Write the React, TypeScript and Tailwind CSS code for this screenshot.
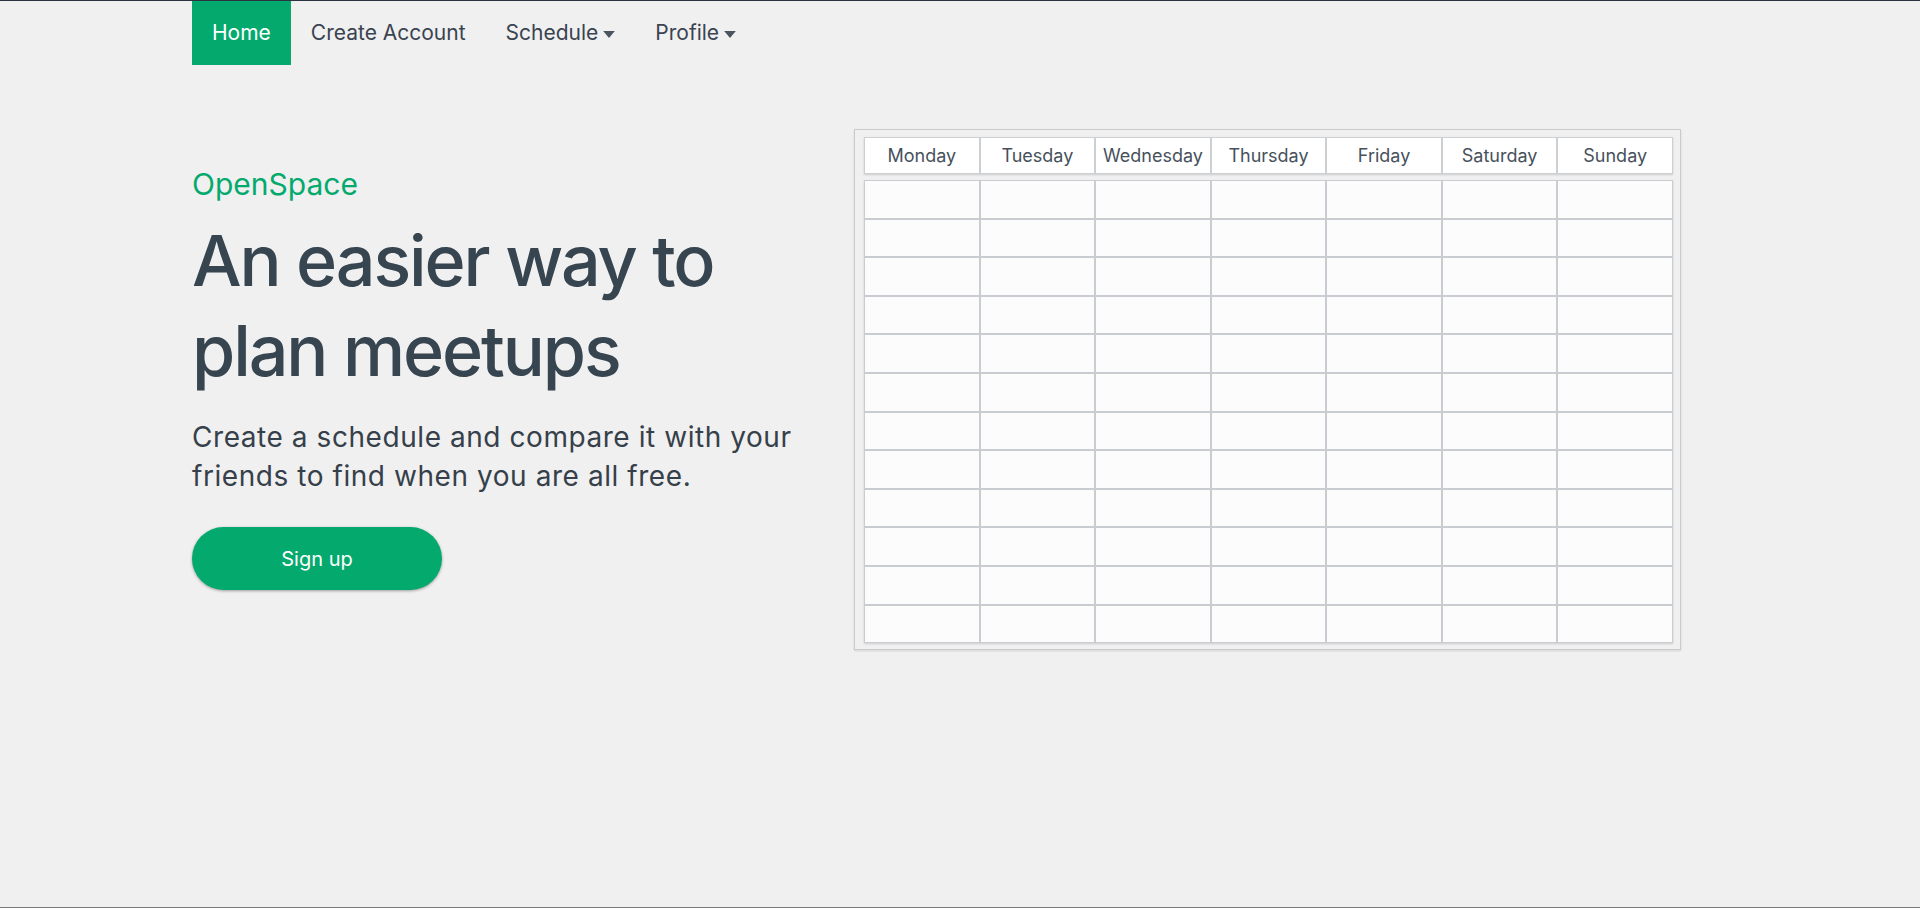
const days = ["Monday", "Tuesday", "Wednesday", "Thursday", "Friday", "Saturday", "Sunday"];
const rows = Array.from({ length: 12 }, (_, i) => i);

const Caret = () => (
  <svg width="12" height="7" viewBox="0 0 10 6" className="ml-[5px] mt-[2px]" fill="#4b5560">
    <path d="M0 0h10L5 6z" />
  </svg>
);

export default function App() {
  return (
    <div className="min-h-screen bg-[#f0f0f0] border-t border-[#2b3340] border-b border-b-[#7a7a7a] font-['Inter',sans-serif] text-[#36454f]">
      <nav className="flex h-16 px-[192px] text-[21px] text-[#3a4350]">
        <a className="flex items-center px-5 bg-[#04aa6d] text-white">Home</a>
        <a className="flex items-center px-5">Create Account</a>
        <a className="flex items-center px-5">
          Schedule
          <Caret />
        </a>
        <a className="flex items-center px-5">
          Profile
          <Caret />
        </a>
      </nav>

      <main className="flex px-[192px] pt-[64px]">
        <div className="w-[662px] pt-[34px]">
          <div className="text-[30px] leading-[42px] text-[#04aa6d]">OpenSpace</div>
          <h1 className="mt-[11px] text-[70px] leading-[90px] font-medium tracking-[-0.03em]">
            An easier way to
            <br />
            plan meetups
          </h1>
          <p className="mt-[22px] text-[28px] leading-[39px] text-[#36404a] tracking-[0.02em]">
            Create a schedule and compare it with your
            <br />
            friends to find when you are all free.
          </p>
          <button className="mt-[31px] flex items-center justify-center w-[250px] h-[63px] rounded-full bg-[#04aa6d] text-white text-[20px] shadow-[0_1px_3px_rgba(0,0,0,0.35)]">
            Sign up
          </button>
        </div>

        <div className="w-[827px] h-[521px] border border-[#c9cccf] shadow-[0_1px_2px_rgba(0,0,0,0.12)] pl-[9px] pr-[7px] pt-[7px]">
          <div className="grid grid-cols-7 h-[37px] bg-white shadow-[0_1px_2px_rgba(0,0,0,0.15)]">
            {days.map((d) => (
              <div
                key={d}
                className="flex items-center justify-center border border-[#ccd0d3] text-[18px] text-[#47515b]"
              >
                {d}
              </div>
            ))}
          </div>
          <div className="mt-[6px] grid grid-cols-7 bg-[#fcfcfc] shadow-[0_1px_2px_rgba(0,0,0,0.15)]">
            {rows.map((r) =>
              days.map((d) => (
                <div key={r + d} className="h-[38.6px] border border-[#c9cdd1]" />
              ))
            )}
          </div>
        </div>
      </main>
    </div>
  );
}
